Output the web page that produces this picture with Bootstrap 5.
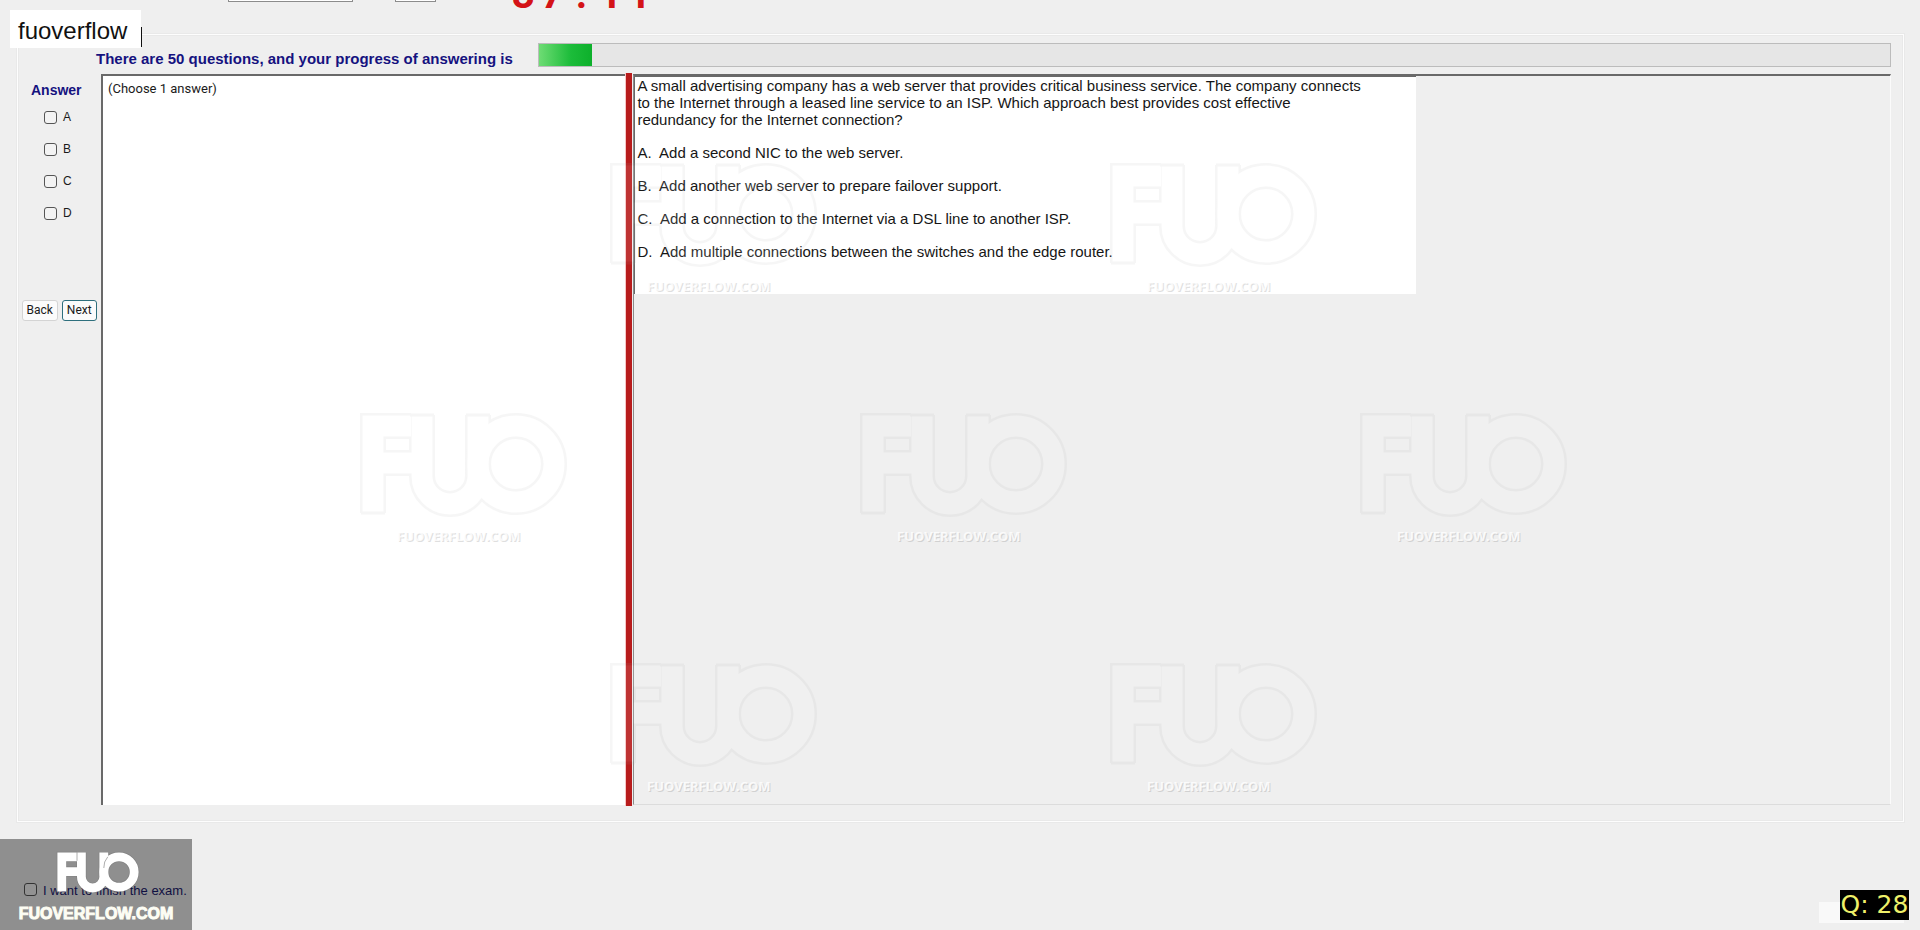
<!DOCTYPE html>
<html lang="en">
<head>
<meta charset="utf-8">
<meta name="viewport" content="width=device-width, initial-scale=1">
<title>Exam - question 28</title>
<link href="https://cdn.jsdelivr.net/npm/bootstrap@5.3.0/dist/css/bootstrap.min.css" rel="stylesheet">
<style>
  body { background: #efefef; color: #1a1a1a; font-family: "Liberation Sans", Arial, sans-serif; font-size: 12px; line-height: 16px; }
  .strip { height: 10px; margin-bottom: 24px; padding-left: 228px; }
  .strip select { height: 24px; border: 1px solid #8c8c8c; background: #fff; font-size: 12px; }
  .sel-wide { width: 125px; margin-right: 42px; }
  .sel-slim { width: 41px; margin-right: 73px; }
  .clock { color: #d41317; font: 700 40px/30px "Roboto", sans-serif; }
  .clock span { width: 29px; text-align: center; }
  .group-box { margin: 0 16px 0 17px; border: 1px solid #fdfdfd; box-shadow: inset 0 0 0 1px #e9e9e9, 0 0 0 1px #e9e9e9; padding: 0 12px 16px 0; }
  .title-row { height: 39px; padding: 8px 0 0 78px; }
  .navy-text { color: #15127f; font-weight: 700; }
  .title-text { font-size: 15px; line-height: 32px; width: 442px; white-space: nowrap; }
  .gauge { height: 24px; border: 1px solid #bcbcbc; border-radius: 0; background: #e6e6e6; }
  .gauge .progress-bar { background: linear-gradient(90deg, #6edc74, #1cbc3a 60%, #0db02b); }
  .side { width: 83px; flex: none; }
  .side h2 { font-size: 14px; line-height: 16px; margin: 8px 0 13px 13px; }
  .choice { height: 32px; padding-left: 26px; gap: 6px; display: flex; align-items: flex-start; }
  .choice label { font-size: 12px; line-height: 13px; }
  .box { appearance: none; width: 13px; height: 13px; margin: 0; border: 1px solid #555; border-radius: 3px; background: #f3f3f3; flex: none; }
  .choices { height: 189px; }
  .key { height: 21px; width: 38px; padding: 0; font: 12px/19px "Roboto", sans-serif; background: #fbfbfb; border: 1px solid #d4d4d4; border-radius: 3px; color: #1a1a1a; }
  .key-main { border-color: #2e6f7d; }
  .pane-left { width: 28%; flex: none; background: #fff; border: solid #696969; border-width: 2px 0 0 2px; padding: 4px 5px; font: 13px/18px "Roboto", sans-serif; }
  .splitter { width: 6px; background: #b81c1c; box-shadow: -1px 0 0 #f7c6c6; margin: -1px 1px -1px 1px; flex: none; }
  .pane-right { border: 1px solid; border-color: #696969 #fbfbfb #dcdcdc #8c8c8c; border-top-width: 2px; }
  .question { max-width: 782px; height: 218px; background: #fff; border: solid #696969; border-width: 1px 0 0 1px; padding: 0 2px; font-size: 15px; line-height: 17px; color: #161616; }
  .question p { margin: 0 0 16px; }
  .foot { height: 108px; }
  .finish { color: #1b1a6e; padding: 61px 0 0 24px; gap: 6px; }
  .finish label { font-size: 13px; line-height: 16px; }
  .brand { left: 0; bottom: 0; width: 192px; height: 91px; background: rgba(0,0,0,.4); pointer-events: none; }
  .name-tag { left: 10px; top: 10px; width: 131px; height: 38px; background: #fff; color: #111; font-size: 24px; line-height: 42px; padding-left: 8px; }
  .name-tag::after { content: ""; position: absolute; left: 131px; top: 17px; width: 1px; height: 20px; background: #111; }
  .counter { right: 11px; bottom: 10px; background: #000; color: #eef06a; font: 25px/30px "DejaVu Sans", sans-serif; width: 69px; text-align: center; white-space: nowrap; }
  .blank-tab { right: 16px; bottom: 7px; width: 85px; height: 21px; background: #f9f9f9; }
  .marks { left: 0; top: 0; pointer-events: none; }
</style>
</head>
<body class="d-flex flex-column min-vh-100 position-relative overflow-hidden">

<header class="strip d-flex align-items-end overflow-hidden">
  <select class="sel-wide mb-2" aria-label="Font"><option></option></select>
  <select class="sel-slim mb-2" aria-label="Size"><option></option></select>
  <div class="clock d-flex"><span>3</span><span>7</span><span>:</span><span>1</span><span>1</span></div>
</header>

<main class="group-box d-flex flex-column flex-grow-1">
  <div class="title-row d-flex">
    <div class="title-text navy-text">There are 50 questions, and your progress of answering is</div>
    <div class="progress gauge flex-grow-1" role="progressbar" aria-label="Progress">
      <div class="progress-bar" style="width:3.9%"></div>
    </div>
  </div>

  <div class="d-flex flex-grow-1">
    <aside class="side">
      <h2 class="navy-text">Answer</h2>
      <div class="choices">
        <div class="choice"><input class="box" type="checkbox" id="a"><label for="a">A</label></div>
        <div class="choice"><input class="box" type="checkbox" id="b"><label for="b">B</label></div>
        <div class="choice"><input class="box" type="checkbox" id="c"><label for="c">C</label></div>
        <div class="choice"><input class="box" type="checkbox" id="d"><label for="d">D</label></div>
      </div>
      <div class="d-flex justify-content-end gap-1 px-1">
        <button class="btn key" type="button">Back</button>
        <button class="btn key key-main" type="button">Next</button>
      </div>
    </aside>
    <section class="pane-left">(Choose 1 answer)</section>
    <div class="splitter"></div>
    <section class="pane-right flex-grow-1">
      <div class="question">
        <p>A small advertising company has a web server that provides critical business service. The company connects<br>to the Internet through a leased line service to an ISP. Which approach best provides cost effective<br>redundancy for the Internet connection?</p>
        <p>A.&nbsp; Add a second NIC to the web server.</p>
        <p>B.&nbsp; Add another web server to prepare failover support.</p>
        <p>C.&nbsp; Add a connection to the Internet via a DSL line to another ISP.</p>
        <p>D.&nbsp; Add multiple connections between the switches and the edge router.</p>
      </div>
    </section>
  </div>
</main>

<footer class="foot">
  <div class="finish d-flex">
    <input class="box" type="checkbox" id="finish"><label for="finish">I want to finish the exam.</label>
  </div>
</footer>

<div class="name-tag position-absolute">fuoverflow</div>

<svg class="marks position-absolute w-100 h-100" aria-hidden="true">
  <defs>
    <g id="logo-lines" fill="none">
      <path d="M12 99V12H50M12 49H54"/>
      <path d="M61 1V62A28 28 0 0 0 117 62V1"/>
      <circle cx="155" cy="50" r="38"/>
    </g>
    <g id="mark">
      <g opacity=".1">
        <use href="#logo-lines" stroke="#aaa" stroke-width="26"/>
        <use href="#logo-lines" stroke="#fff" stroke-width="21"/>
        <path d="M0 99H24M49 1H73M105 1H129" stroke="#aaa" stroke-width="3"/>
      </g>
      <g font-family="Open Sans, sans-serif" font-size="13" font-weight="700">
        <text x="37" y="128" fill="#000" opacity=".12">FUOVERFLOW.COM</text>
        <text x="36" y="127" fill="#fff" opacity=".8">FUOVERFLOW.COM</text>
      </g>
    </g>
  </defs>
  <use href="#mark" x="611" y="164"/><use href="#mark" x="1111" y="164"/>
  <use href="#mark" x="361" y="414"/><use href="#mark" x="861" y="414"/><use href="#mark" x="1361" y="414"/>
  <use href="#mark" x="611" y="664"/><use href="#mark" x="1111" y="664"/>
</svg>

<svg class="brand position-absolute" viewBox="0 0 192 91" role="img" aria-label="FUO">
  <g transform="translate(57 13) scale(.4)">
    <use href="#logo-lines" stroke="#777" stroke-width="25" opacity=".5"/>
    <use href="#logo-lines" stroke="#fff" stroke-width="22"/>
    <path d="M117 40A40 40 0 0 1 127 12M50 0V22" stroke="#999" stroke-width="2" fill="none"/>
  </g>
  <text x="96" y="80" text-anchor="middle" fill="#fdfdf4" stroke="#fdfdf4" stroke-width="1" font-family="Liberation Sans, sans-serif" font-weight="700" font-size="16">FUOVERFLOW.COM</text>
</svg>

<div class="blank-tab position-absolute"></div>
<div class="counter position-absolute">Q: 28</div>

<script src="https://cdn.jsdelivr.net/npm/bootstrap@5.3.0/dist/js/bootstrap.bundle.min.js"></script>
</body>
</html>
